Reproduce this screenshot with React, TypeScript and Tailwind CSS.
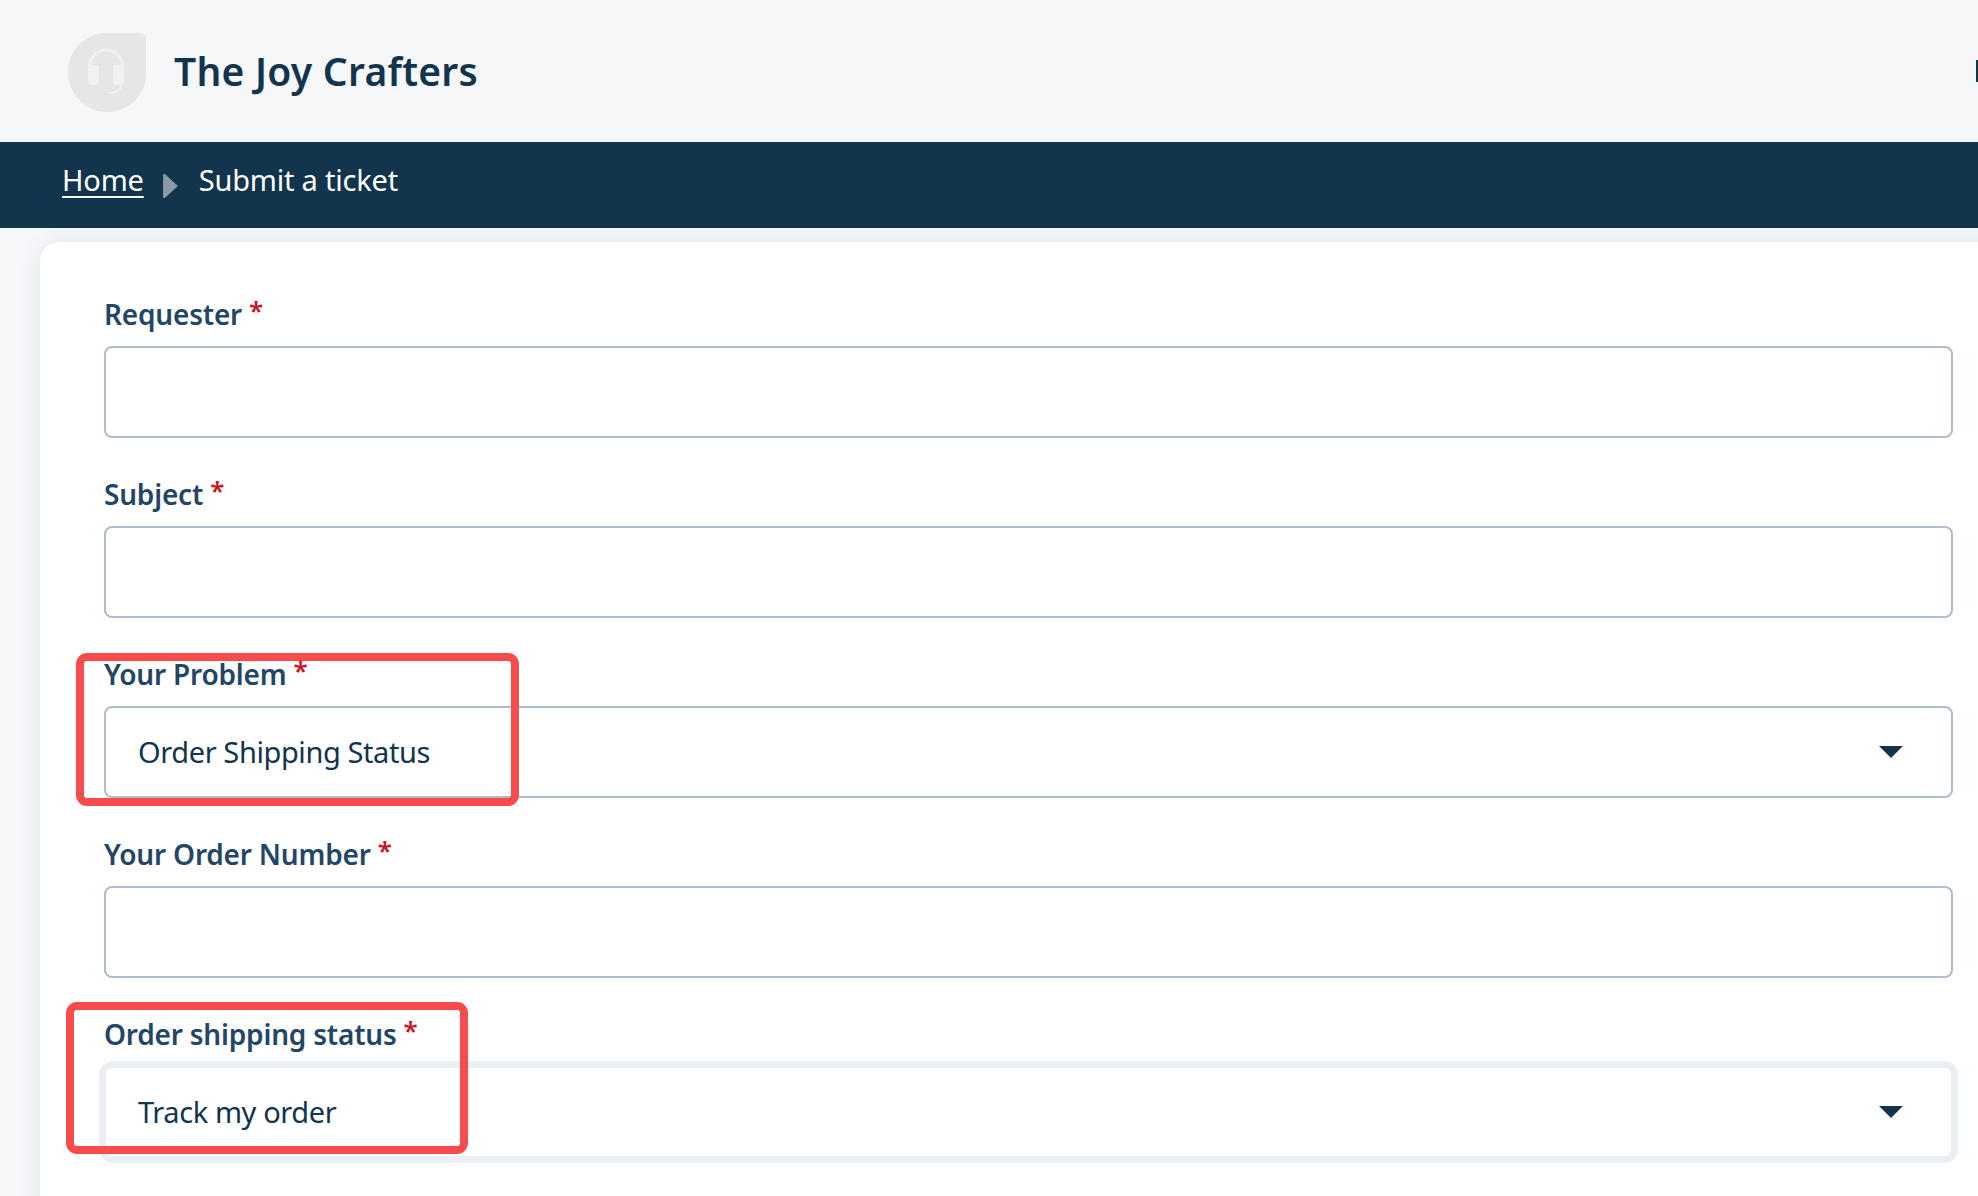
const font = { fontFamily: '"Noto Sans", sans-serif' };

function Caret() {
  return (
    <svg width="24" height="12" viewBox="0 0 24 12" className="absolute right-[48px] top-1/2 -translate-y-1/2">
      <path d="M0 0H24L12 12Z" fill="#12344d" />
    </svg>
  );
}

function Field({
  label,
  value,
  select,
  focused,
}: {
  label: string;
  value?: string;
  select?: boolean;
  focused?: boolean;
}) {
  return (
    <div className="flex flex-col">
      <div className="h-[58px] pt-[7px] flex items-start text-[#234566] font-semibold text-[28px] leading-[38px] tracking-[-0.2px]">
        {label}
        <span className="text-[#c7161f] ml-[7px] text-[26px] leading-[30px]">*</span>
      </div>
      <div className="relative">
        {focused ? <div className="absolute -inset-[5px] rounded-[14px] border-[6px] border-[#ebeff3]" /> : null}
        <div
          className={`relative h-[92px] rounded-[8px] border-2 flex items-center pl-[32px] text-[#12344d] text-[29px] tracking-[-0.4px] bg-white ${focused ? "border-[#ebeff3]" : "border-[#b0bccb]"}`}
        >
          {value}
          {select ? <Caret /> : null}
        </div>
      </div>
    </div>
  );
}

export default function App() {
  return (
    <div style={font} className="relative h-[1196px] w-[1978px] overflow-hidden bg-[#f5f7f9]">
      <header className="h-[142px] flex items-center pl-[67px] bg-[#f5f7f9]">
        <svg width="80" height="80" viewBox="0 0 80 80" className="shrink-0 mt-[2px]">
          <path d="M40 1H73Q79 1 79 7V42C79 64 61 80 40 80C18 80 1 62 1 40C1 18 18 1 40 1Z" fill="#e4e6e8" />
          <path d="M22.5 38V34.5a16.5 16.5 0 0 1 33 0V38" fill="none" stroke="#f0f1f2" strokeWidth="3" />
          <rect x="21" y="33" width="11" height="20" rx="3" fill="#f0f1f2" />
          <rect x="46" y="33" width="11" height="20" rx="3" fill="#f0f1f2" />
          <path d="M54 53C54 58 50 61 41 61" fill="none" stroke="#f0f1f2" strokeWidth="2" />
        </svg>
        <div className="ml-[27px] text-[#12344d] font-semibold text-[39px] leading-[50px] tracking-[0.25px]">
          The Joy Crafters
        </div>
        <div className="ml-auto w-[2px] h-[22px] bg-[#12344d]" />
      </header>
      <nav className="h-[86px] bg-[#12344d] flex items-center pl-[62px] pb-[10px] text-white text-[29px] tracking-[-0.2px]">
        <a className="underline underline-offset-[5px] decoration-2">Home</a>
        <svg width="17" height="26" viewBox="0 0 16 24" className="ml-[18px] mr-[20px] mt-[12px]">
          <path d="M1 2Q1 0 3 1L15 12L3 23Q1 24 1 22Z" fill="#8b99a6" />
        </svg>
        <span>Submit a ticket</span>
      </nav>
      <main className="pl-[40px] pt-[14px]">
        <div className="w-[2000px] h-[1000px] bg-white rounded-tl-[20px] shadow-[0_0_24px_rgba(18,52,77,0.08)] pl-[64px] pr-[65px] pt-[46px]">
          <div className="w-[1849px] flex flex-col gap-[30px]">
            <Field label="Requester" />
            <Field label="Subject" />
            <Field label="Your Problem" value="Order Shipping Status" select />
            <Field label="Your Order Number" />
            <Field label="Order shipping status" value="Track my order" select focused />
          </div>
        </div>
      </main>
      <div className="absolute left-[76px] top-[653px] w-[443px] h-[153px] border-[8px] border-[#f84c4c] rounded-[11px]" />
      <div className="absolute left-[66px] top-[1002px] w-[402px] h-[152px] border-[8px] border-[#f84c4c] rounded-[11px]" />
    </div>
  );
}
